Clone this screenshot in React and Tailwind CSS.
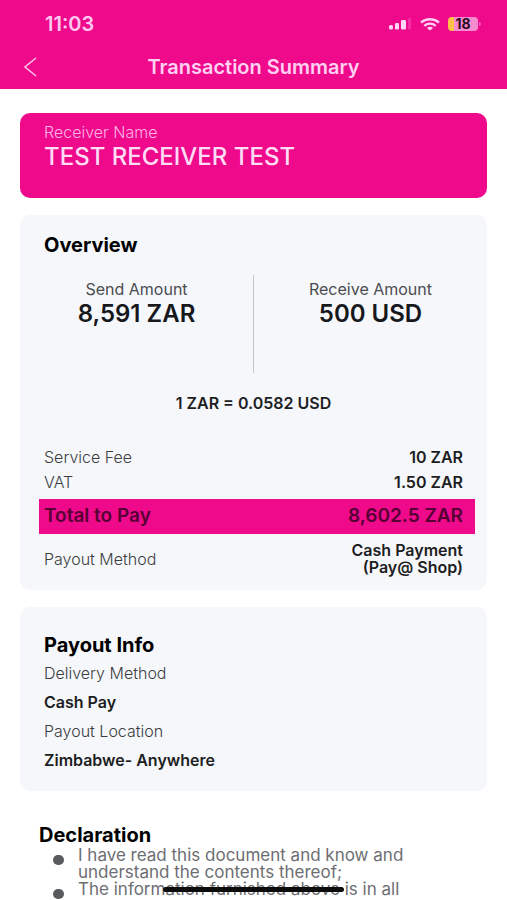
import React from "react";

const fees = [
    { label: "Service Fee", value: "10 ZAR" },
    { label: "VAT", value: "1.50 ZAR" },
];

const payout = [
    { label: "Delivery Method", value: "Cash Pay" },
    { label: "Payout Location", value: "Zimbabwe- Anywhere" },
];

const declarations = [
    "I have read this document and know and understand the contents thereof;",
    "The information furnished above is in all",
];

function StatusBar() {
    return (
        <div className="flex h-12 items-center justify-between pl-[45px] pr-[26px]">
            <span className="text-xl font-semibold text-[#ffc8f0]">11:03</span>
            <div className="flex items-center gap-2">
                {/* Signal */}
                <svg width="24" height="12" viewBox="0 0 24 12" aria-hidden="true">
                    <rect x="1" y="7" width="4" height="4.5" rx="1.5" fill="#ffd6f5" />
                    <rect x="7" y="5" width="4" height="6.5" rx="1.2" fill="#ffd6f5" />
                    <rect x="13" y="2" width="5" height="9.5" rx="1.2" fill="#ffd6f5" />
                    <rect x="20" y="0" width="3" height="11.5" rx="1.2" fill="#f32fa1" />
                </svg>
                {/* Wifi */}
                <svg width="20" height="13" viewBox="0 0 20 13" fill="none" stroke="#ffd0f3" strokeWidth="2.4" aria-hidden="true">
                    <path d="M1 4.6C6 .1 14 .1 19 4.6" />
                    <path d="M4.3 7.8c3.3-2.9 8.1-2.9 11.4 0" />
                    <path d="M10 12.6 6.9 9.9c1.8-1.5 4.4-1.5 6.2 0z" fill="#ffd0f3" stroke="none" />
                </svg>
                {/* Battery */}
                <div className="flex items-center gap-px">
                    <div className="flex h-[14px] w-[30px] items-center justify-center rounded bg-linear-to-r from-[#ffc247] from-20% to-[#f78bd0] to-20% text-sm leading-none font-bold text-[#2b0a22]">
                        18
                    </div>
                    <div className="h-1 w-[2px] rounded-r-full bg-[#f759b4]" />
                </div>
            </div>
        </div>
    );
}

function Header() {
    return (
        <header className="h-[89px] bg-[#ef098b]">
            <StatusBar />
            <div className="grid grid-cols-[48px_1fr_48px] items-center">
                <button type="button" aria-label="Back" className="flex h-[38px] items-center pl-6">
                    <svg width="13" height="20" viewBox="0 0 13 20" fill="none" stroke="#ffc0ea" strokeWidth="1.5" aria-hidden="true">
                        <path d="M12 1 1 10l11 9" />
                    </svg>
                </button>
                <h1 className="text-center text-xl leading-6 font-semibold text-[#ffd0f2]">Transaction Summary</h1>
            </div>
        </header>
    );
}

function Amount({ label, value }) {
    return (
        <div className="flex flex-1 flex-col items-center pt-1">
            <span className="text-base leading-5 text-[#4b4c50]">{label}</span>
            <span className="text-2xl leading-[30px] font-semibold text-[#17181c]">{value}</span>
        </div>
    );
}

export default function App() {
    return (
        <div className="min-h-screen bg-white font-['Inter','Liberation_Sans',sans-serif]">
            <Header />

            <main className="px-5 pt-6">
                {/* Receiver */}
                <section className="h-[85px] rounded-[10px] bg-[#ef098b] px-6 pt-[9px]">
                    <p className="text-base leading-5 font-light text-[#ffb3e6]">Receiver Name</p>
                    <p className="text-2xl leading-[30px] font-medium text-[#ffdcf6]">TEST RECEIVER TEST</p>
                </section>

                {/* Overview */}
                <section className="mt-[17px] rounded-[10px] bg-[#f5f7fb] pt-[18px] pb-[14px]">
                    <h2 className="px-6 text-xl leading-6 font-bold text-black">Overview</h2>

                    <div className="mt-[18px] flex h-[98px]">
                        <Amount label="Send Amount" value="8,591 ZAR" />
                        <div className="w-px bg-[#c6c7cb]" />
                        <Amount label="Receive Amount" value="500 USD" />
                    </div>

                    <p className="mt-5 text-center text-base leading-5 font-semibold text-[#1d1e22]">1 ZAR = 0.0582 USD</p>

                    <dl className="mt-8 pr-3 pl-[19px] text-base">
                        {fees.map((fee) => (
                            <div key={fee.label} className="flex justify-between pr-3 pl-[5px] leading-[25px]">
                                <dt className="font-light text-[#3c3d41]">{fee.label}</dt>
                                <dd className="font-semibold text-[#1d1e22]">{fee.value}</dd>
                            </div>
                        ))}
                        <div className="mt-1 flex h-[35px] items-center justify-between bg-[#ef098b] pr-3 pl-[5px] text-[19px] font-semibold text-[#560034]">
                            <dt>Total to Pay</dt>
                            <dd>8,602.5 ZAR</dd>
                        </div>
                        <div className="mt-2 flex items-center justify-between pr-3 pl-[5px] leading-[17px]">
                            <dt className="font-light text-[#3c3d41]">Payout Method</dt>
                            <dd className="text-right font-semibold text-[#1d1e22]">
                                Cash Payment
                                <br />
                                (Pay@ Shop)
                            </dd>
                        </div>
                    </dl>
                </section>

                {/* Payout Info */}
                <section className="mt-[17px] rounded-[10px] bg-[#f5f7fb] px-6 pt-[26px] pb-4">
                    <h2 className="text-xl leading-6 font-bold text-black">Payout Info</h2>
                    <dl className="pt-[2px] text-base leading-[29px]">
                        {payout.map((item) => (
                            <div key={item.label}>
                                <dt className="font-light text-[#3c3d41]">{item.label}</dt>
                                <dd className="font-semibold text-[#1d1e22]">{item.value}</dd>
                            </div>
                        ))}
                    </dl>
                </section>

                {/* Declaration */}
                <section className="mt-8 px-[19px]">
                    <h2 className="text-xl leading-6 font-bold text-black">Declaration</h2>
                    <ul className="text-[17px] leading-[17px] text-[#6d6e72]">
                        {declarations.map((text) => (
                            <li key={text} className="flex pr-10 pl-[14px]">
                                <span className="mt-2 mr-[14px] h-[10px] w-[11px] shrink-0 rounded-full bg-[#595a5e]" />
                                {text}
                            </li>
                        ))}
                    </ul>
                </section>
            </main>

            {/* Home indicator */}
            <div className="fixed inset-x-0 bottom-2 flex justify-center">
                <div className="h-[5px] w-[181px] rounded-full bg-[#0c0c0d]" />
            </div>
        </div>
    );
}
